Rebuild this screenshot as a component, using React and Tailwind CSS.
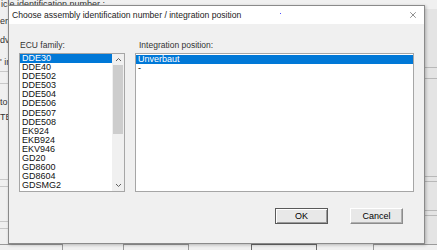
import { X } from "lucide-react";

const ecuFamilies = [
  "DDE30",
  "DDE40",
  "DDE502",
  "DDE503",
  "DDE504",
  "DDE506",
  "DDE507",
  "DDE508",
  "EK924",
  "EKB924",
  "EKV946",
  "GD20",
  "GD8600",
  "GD8604",
  "GDSMG2",
];

const positions = ["Unverbaut", "-"];

function Chevron({ down }) {
  return (
    <svg width="7" height="5" viewBox="0 0 7 5" className="text-[#606060]">
      <path d={down ? "M1 1 L3.5 3.5 L6 1" : "M1 4 L3.5 1.5 L6 4"} fill="none" stroke="currentColor" strokeWidth="1" />
    </svg>
  );
}

function Button({ label, primary }) {
  return (
    <button
      className={`w-[53px] h-[16px] bg-[#e8e8e8] text-[9px] text-black leading-none flex items-center justify-center ${
        primary
          ? "border border-[#5a5a5a] shadow-[inset_1px_1px_#ffffff,inset_-1px_-1px_#9a9a9a]"
          : "border border-[#8c8c8c] border-t-white border-l-white shadow-[inset_-1px_-1px_#b0b0b0]"
      }`}
    >
      {label}
    </button>
  );
}

export default function App() {
  return (
    <div className="relative w-[437px] h-[250px] bg-[#f0f0f0] overflow-hidden font-['Liberation_Sans',Arial,sans-serif] text-black">
      {/* window behind the dialog */}
      <div className="flex flex-col h-full">
        <div className="h-[9px] pl-[1px] text-[9px] leading-[8px] text-[#333] whitespace-nowrap">icle identification number :</div>
        <div className="flex flex-1">
          <div className="w-[8px] flex flex-col text-[9px] text-[#333] whitespace-nowrap">
            <div className="mt-[6px]">en</div>
            <div className="mt-[5px]">dv</div>
            <div className="mt-[9px]">' in</div>
            <div className="mt-[1px] border-t border-[#c8c8c8] h-[13px] border-b"></div>
            <div className="mt-[12px]">to</div>
            <div className="mt-[2px]">TE</div>
            <div className="mt-[54px] border-t border-[#c8c8c8] h-[8px] border-b"></div>
            <div className="mt-[34px] border-t border-[#c8c8c8] h-[8px] border-b"></div>
          </div>
          <div className="flex-1"></div>
          <div className="w-[13px] bg-[#e4e4e4] border-l border-[#a8a8a8] flex flex-col">
            <div className="mt-[58px] h-[12px] border-t border-b border-[#b8b8b8]"></div>
            <div className="mt-[97px] h-[6px] border-t border-b border-[#b8b8b8]"></div>
            <div className="mt-[28px] h-[6px] border-t border-b border-[#b8b8b8]"></div>
          </div>
        </div>
        <div className="h-[6px] flex">
          <div className="w-[63px] border-t border-r border-[#9a9a9a]"></div>
          <div className="w-[60px]"></div>
          <div className="w-[66px] border-t border-l border-r border-[#9a9a9a]"></div>
          <div className="w-[62px]"></div>
          <div className="w-[66px] border-t border-l border-r border-[#6a6a6a]"></div>
          <div className="w-[56px]"></div>
          <div className="flex-1 border-t border-l border-[#9a9a9a]"></div>
        </div>
      </div>

      {/* dialog window */}
      <div className="absolute left-[8px] top-[5px] w-[417px] h-[239px] bg-[#f0f0f0] border border-[#8a8a8a] shadow-[1px_1px_3px_rgba(0,0,0,0.25)] flex flex-col">
        <div className="relative h-[18px] bg-white flex items-center pl-[3px] pr-[6px]">
          <span className="text-[8.6px] text-[#222] whitespace-nowrap">
            Choose assembly identification number / integration position
          </span>
          <span className="absolute left-[271px] top-[7px] w-[1px] h-[1px] bg-[#5050ff]"></span>
          <X className="ml-auto w-[10px] h-[10px] text-[#333]" strokeWidth={1.3} />
        </div>

        <div className="flex-1 flex flex-col px-[10px]">
          <div className="flex mt-[17px] h-[12px] text-[8.5px] text-[#333] leading-none">
            <div className="w-[116px] pl-[1px]">ECU family:</div>
            <div className="pl-[4px]">Integration position:</div>
          </div>

          <div className="flex gap-[10px] h-[139px]">
            <div className="w-[106px] border border-[#a6a6a6] bg-white flex overflow-hidden">
              <div className="flex-1 text-[9px] leading-[9.1px] text-[#111] overflow-hidden">
                {ecuFamilies.map((name, i) => (
                  <div key={name} className={`pl-[2px] ${i === 0 ? "bg-[#0078d7] text-white" : ""}`}>
                    {name}
                  </div>
                ))}
              </div>
              <div className="w-[12px] bg-[#f0f0f0] flex flex-col items-center">
                <div className="h-[11px] flex items-center justify-center">
                  <Chevron />
                </div>
                <div className="w-[10px] h-[69px] bg-[#cdcdcd]"></div>
                <div className="flex-1"></div>
                <div className="h-[11px] flex items-center justify-center">
                  <Chevron down />
                </div>
              </div>
            </div>

            <div className="flex-1 border border-[#a6a6a6] bg-white pt-[1px] text-[9px] leading-[9.2px]">
              {positions.map((p, i) => (
                <div key={p} className={`pl-[2px] ${i === 0 ? "bg-[#0078d7] text-white" : ""}`}>
                  {p}
                </div>
              ))}
            </div>
          </div>

          <div className="flex justify-end gap-[22px] mt-[16px] pr-[11px]">
            <Button label="OK" primary />
            <Button label="Cancel" />
          </div>
        </div>
      </div>
    </div>
  );
}
